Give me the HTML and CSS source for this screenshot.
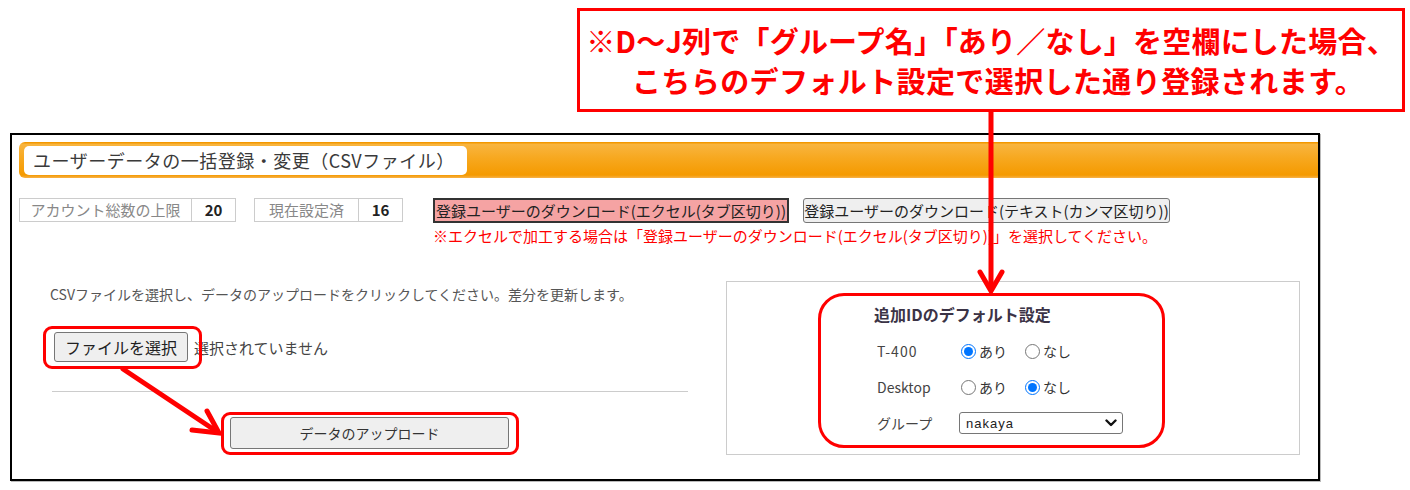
FILE: index.html
```html
<!DOCTYPE html>
<html lang="ja">
<head>
<meta charset="utf-8">
<title>ユーザーデータの一括登録・変更</title>
<link rel="stylesheet" href="styles.css">
</head>
<body>
<div class="page">
  <div class="callout">
    <p>※D〜J列で「グループ名」「あり／なし」を空欄にした場合、</p>
    <p>こちらのデフォルト設定で選択した通り登録されます。</p>
  </div>

  <div class="frame">
    <div class="titlebar">
      <div class="title">ユーザーデータの一括登録・変更（CSVファイル）</div>
    </div>

    <div class="toolbar">
      <div class="stat stat-first">
        <span class="stat-label w1">アカウント総数の上限</span>
        <span class="stat-value">20</span>
      </div>
      <div class="stat stat-last">
        <span class="stat-label w2">現在設定済</span>
        <span class="stat-value">16</span>
      </div>
      <div class="downloads">
        <div class="dl-buttons">
          <button class="btn btn-excel">登録ユーザーのダウンロード(エクセル(タブ区切り))</button>
          <button class="btn btn-text">登録ユーザーのダウンロード(テキスト(カンマ区切り))</button>
        </div>
        <p class="note">※エクセルで加工する場合は「登録ユーザーのダウンロード(エクセル(タブ区切り))」を選択してください。</p>
      </div>
    </div>

    <div class="lower">
      <div class="upload-col">
        <p class="desc">CSVファイルを選択し、データのアップロードをクリックしてください。差分を更新します。</p>
        <div class="file-row">
          <span class="mark mark-file"><button class="btn btn-file">ファイルを選択</button></span>
          <span class="file-status">選択されていません</span>
        </div>
        <hr class="sep">
        <div class="upload-row">
          <span class="mark mark-upload"><button class="btn btn-upload">データのアップロード</button></span>
        </div>
      </div>

      <div class="defaults-panel">
        <div class="defaults-box">
          <h3 class="defaults-title">追加IDのデフォルト設定</h3>
          <div class="defaults-grid">
            <span class="dlabel dlabel-t">T-400</span>
            <div class="radios">
              <label><input type="radio" name="t400" checked>あり</label>
              <label><input type="radio" name="t400">なし</label>
            </div>
            <span class="dlabel">Desktop</span>
            <div class="radios">
              <label><input type="radio" name="desktop">あり</label>
              <label><input type="radio" name="desktop" checked>なし</label>
            </div>
            <span class="dlabel">グループ</span>
            <div class="select-wrap">
              <select class="group-select"><option>nakaya</option></select>
              <svg class="chevron" width="12" height="8" viewBox="0 0 12 8" aria-hidden="true"><polyline points="1.5,1.5 6,6 10.5,1.5" fill="none" stroke="#111" stroke-width="2.4" stroke-linecap="round" stroke-linejoin="round"/></svg>
            </div>
          </div>
        </div>
      </div>
    </div>
  </div>

  <svg class="annot" width="1410" height="490" viewBox="0 0 1410 490" aria-hidden="true">
    <line x1="991" y1="111" x2="991" y2="289" stroke="#ff0000" stroke-width="5"/>
    <polyline points="980,272 991,291 1002,272" fill="none" stroke="#ff0000" stroke-width="5" stroke-linecap="round" stroke-linejoin="miter"/>
    <line x1="123" y1="369" x2="216" y2="431" stroke="#ff0000" stroke-width="5" stroke-linecap="round"/>
    <polyline points="207,411 219,433 192,430" fill="none" stroke="#ff0000" stroke-width="5" stroke-linecap="round" stroke-linejoin="miter"/>
  </svg>
</div>
</body>
</html>
```

FILE: styles.css
```css
body {
  margin: 0;
  font-family: "Noto Sans CJK JP", "Noto Sans", sans-serif;
  color: #333;
  background: #fff;
}

.page {
  position: relative;
  width: 1410px;
  height: 490px;
  padding-top: 8px;
  box-sizing: border-box;
}

/* callout */
.callout {
  margin-left: 577px;
  width: 828px;
  height: 104px;
  box-sizing: border-box;
  border: 3px solid #ff0000;
  padding-top: 9px;
  color: #ff0000;
  font-weight: 700;
  font-size: 29px;
  line-height: 40px;
  letter-spacing: 0.2px;
  text-align: center;
  white-space: nowrap;
}
.callout p { margin: 0; }
.callout p + p { letter-spacing: 0.4px; padding-left: 14px; }

/* main frame */
.frame {
  margin: 21px 0 0 10px;
  width: 1310px;
  height: 348px;
  box-sizing: border-box;
  border: 2px solid #000;
  box-shadow: 1px 1px 0 #bbb;
  padding: 7px 0 0 7px;
}

.titlebar {
  height: 36px;
  box-sizing: border-box;
  padding: 4px 0 0 5px;
  border-radius: 6px 0 0 6px;
  background: linear-gradient(to bottom, #f39800 0, #f39800 1px, #f8b540 2px, #f7a81f 45%, #f59a00 92%, #f7b24a 100%);
}
.title {
  width: 443px;
  height: 29px;
  box-sizing: border-box;
  background: #fff;
  border-radius: 5px;
  padding-left: 9px;
  font-size: 18px;
  line-height: 29px;
  letter-spacing: 0.5px;
  color: #3a3a3a;
  white-space: nowrap;
}

/* toolbar */
.toolbar {
  display: flex;
  align-items: flex-start;
  margin-top: 20px;
}
.stat {
  display: flex;
  height: 24px;
  box-sizing: border-box;
  border: 1px solid #ccc;
}
.stat-first { margin-right: 18px; }
.stat-last { margin-right: 30px; }
.stat-label {
  box-sizing: border-box;
  border-right: 1px solid #ccc;
  color: #888;
  font-size: 15px;
  line-height: 22px;
  text-align: center;
  white-space: nowrap;
}
.w1 { width: 172px; }
.w2 { width: 104px; }
.stat-value {
  width: 43px;
  text-align: center;
  font-weight: 700;
  font-size: 15px;
  line-height: 22px;
  color: #222;
}

.dl-buttons {
  display: flex;
  gap: 14px;
}
.btn {
  font-family: inherit;
  color: #222;
  padding: 0;
  white-space: nowrap;
}
.btn-excel {
  width: 356px;
  height: 25px;
  background: #f5a3a3;
  border: 2px solid #333;
  border-radius: 0;
  font-size: 15px;
}
.btn-text {
  width: 367px;
  height: 25px;
  background: #efefef;
  border: 1px solid #767676;
  border-radius: 3px;
  font-size: 15px;
}
.note {
  margin: 4px 0 0;
  color: #ff0000;
  font-size: 15px;
  line-height: 18px;
  white-space: nowrap;
}

/* lower area */
.lower {
  display: flex;
  align-items: flex-start;
  margin-top: 36px;
  padding-left: 31px;
}
.upload-col {
  width: 638px;
  padding-top: 3px;
}
.desc {
  margin: 0;
  font-size: 14px;
  line-height: 20px;
  color: #555;
  white-space: nowrap;
}
.file-row {
  display: flex;
  align-items: center;
  margin-top: 28px;
  padding-left: 4px;
}
.btn-file {
  width: 134px;
  height: 30px;
  font-size: 16px;
  background: #efefef;
  border: 1px solid #767676;
  border-radius: 3px;
}
.file-status {
  margin-left: 6px;
  font-size: 15px;
  color: #444;
}
.sep {
  margin: 29px 0 0 2px;
  width: 636px;
  height: 0;
  border: 0;
  border-top: 1px solid #ccc;
}
.upload-row {
  margin-top: 25px;
  padding-left: 180px;
}
.btn-upload {
  width: 279px;
  height: 32px;
  font-size: 14px;
  background: #efefef;
  border: 1px solid #767676;
  border-radius: 3px;
  color: #333;
}

/* red highlight marks (annotation overlays) */
.mark {
  position: relative;
  display: inline-flex;
}
.mark::after {
  content: "";
  position: absolute;
  border: 3px solid #ff0000;
  border-radius: 9px;
  pointer-events: none;
}
.mark-file::after { inset: -6px -14px -7px -11px; }
.mark-upload::after { inset: -5px -10px -6px -9px; }

/* defaults panel */
.defaults-panel {
  margin-left: 38px;
  width: 574px;
  height: 174px;
  box-sizing: border-box;
  border: 1px solid #ccc;
  padding: 11px 0 0 91px;
}
.defaults-box {
  width: 347px;
  height: 155px;
  box-sizing: border-box;
  border: 3px solid #ff0000;
  border-radius: 26px;
  padding: 7px 0 0 53px;
}
.defaults-title {
  margin: 0;
  font-size: 16px;
  line-height: 22px;
  font-weight: 700;
  color: #3b3346;
}
.defaults-grid {
  display: grid;
  grid-template-columns: 82px auto;
  grid-auto-rows: 30px;
  row-gap: 6px;
  align-items: center;
  margin-top: 11px;
  padding-left: 3px;
}
.dlabel {
  font-size: 14px;
  color: #444;
}
.dlabel-t { letter-spacing: 1px; }
.radios {
  display: flex;
  gap: 16px;
}
.radios label {
  display: flex;
  align-items: center;
  font-size: 14px;
  color: #333;
}
.radios input {
  width: 15px;
  height: 15px;
  margin: 0 3px 0 2px;
}
.select-wrap {
  position: relative;
  width: 164px;
  height: 22px;
}
.group-select {
  appearance: none;
  -webkit-appearance: none;
  display: block;
  width: 164px;
  height: 22px;
  box-sizing: border-box;
  font-family: "Liberation Sans", Arial, sans-serif;
  font-size: 13px;
  letter-spacing: 1px;
  border: 1px solid #767676;
  border-radius: 3px;
  padding: 0 0 0 6px;
  background: #fff;
  color: #222;
}
.chevron {
  position: absolute;
  right: 6px;
  top: 7px;
  pointer-events: none;
}

/* annotation arrows */
.annot {
  position: absolute;
  left: 0;
  top: 0;
  pointer-events: none;
}
```
